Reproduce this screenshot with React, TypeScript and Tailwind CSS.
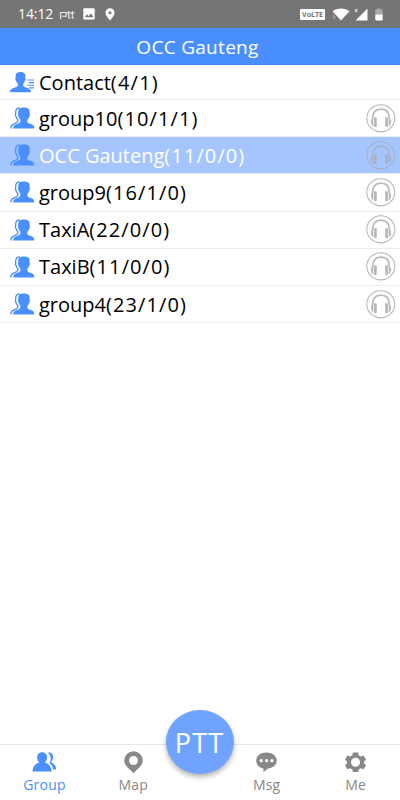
import clsx from 'clsx'

const groups = [
    { name: 'group10', count: '(10/1/1)' },
    { name: 'OCC Gauteng', count: '(11/0/0)', active: true },
    { name: 'group9', count: '(16/1/0)' },
    { name: 'TaxiA', count: '(22/0/0)' },
    { name: 'TaxiB', count: '(11/0/0)' },
    { name: 'group4', count: '(23/1/0)' },
]

const ContactIcon = () => (
    <svg width="25" height="22" viewBox="0 0 25 22" className="shrink-0" fill="#4a8fff">
        <path d="M5.600 5C5.600 2 7.400.9 10.500.9s5 1.100 5 4.100l-.1 2.100c.6.3.4 2-.4 2.500-.4 1.600-1 2.400-1.800 3.100v2.100c.6 1.200 2.300 1.600 4.300 2.200 2.500.8 3.400 1.600 3.500 4.300H0c.1-2.700 1-3.500 3.500-4.300 2-.6 3.700-1 4.300-2.200v-2.100C7 12 6.400 11.200 6 9.600c-.8-.5-1-2.200-.4-2.500z" />
        <path d="M17.200 8.500H24v1.100h-6.800zM18.500 11.100H24v1.100h-5.500zM17 13.700h7v1.100h-7zM19 16.300h5v1.100h-5z" />
    </svg>
)

const GroupIcon = () => (
    <svg width="25" height="22" viewBox="0 0 25 22" className="shrink-0" fill="#4a8fff">
        <path d="M8.200 5C8.200 1.700 10.300.5 14 .5s5.700 1.200 5.700 4.400l-.1 2.200c.6.3.4 2-.4 2.600-.4 1.600-1 2.400-1.800 3.100v2.100c.6 1.200 2 1.600 3.800 2.200 2.300.8 3 1.700 3.100 4.500H3.100c.2-2.600 1.100-3.600 3.100-4.400 2.100-.8 3.600-1.200 4.200-2.500v-2.200c-.8-.7-1.400-1.300-1.700-2.800-.7-.6-1-2.200-.5-2.600z" />
        <path
            d="M10 .9C7 1 5.700 2.300 5.700 5v2.200c-.6.5-.2 1.900.4 2.400.3 1.400.9 2.100 1.700 2.800v2c-.6 1.300-2 1.800-3.800 2.500C1.700 17.800.9 18.900.8 21.500"
            fill="none"
            stroke="#4a8fff"
            strokeWidth="1.300"
        />
    </svg>
)

const Headphones = ({ active }: { active?: boolean }) => (
    <svg
        width="30"
        height="29"
        viewBox="0 0 30 29"
        className={clsx('shrink-0', active ? 'text-[#a9b0c4]' : 'text-[#b8b8b8]')}
        fill="none"
        stroke="currentColor"
    >
        <ellipse cx="14.800" cy="14.300" rx="14" ry="13.600" strokeWidth="1.100" />
        <path d="M6.700 14.500C6.400 8.500 9.500 5.200 15 5.200s8.600 3.300 8.300 9.300" strokeWidth="1.700" />
        <path d="M7 13.500c-2.600 2-2.600 6.400 0 8.800zM23 13.500c2.600 2 2.600 6.400 0 8.800z" fill="currentColor" strokeWidth=".3" />
        <rect x="7.900" y="13.200" width="2.900" height="9.800" rx="1" fill="currentColor" stroke="none" />
        <rect x="19.200" y="13.200" width="2.900" height="9.800" rx="1" fill="currentColor" stroke="none" />
    </svg>
)

const StatusBar = () => (
    <div className="flex h-7 items-center bg-[#757575] pl-[18px] pr-[17px] text-white">
        <span className="w-[35px] text-[14px] leading-none tracking-[-0.1px]">14:12</span>
        <svg width="15" height="10" viewBox="0 0 15 10" className="ml-[7px] mt-[2px]" fill="none" stroke="#eee" strokeWidth="1.100">
            <path d="M.6 9V2.500h5.600v3.800H2M8.700 1v7h2M12.300 1v7h2M6.800 3h8" />
        </svg>
        <svg width="12" height="12" viewBox="0 0 12 12" className="ml-[8px]">
            <rect x=".3" y=".3" width="11.400" height="11.200" rx="1.200" fill="#fff" />
            <path d="M1.800 9.300 4 6.300l1.700 2 2.200-3 2.500 4z" fill="#757575" />
        </svg>
        <svg width="10" height="13" viewBox="0 0 10 13" className="ml-[10px]">
            <path d="M5 .3A4.500 4.500 0 0 0 .5 4.800C.5 8 5 12.500 5 12.500S9.500 8 9.500 4.800A4.500 4.500 0 0 0 5 .3z" fill="#fff" />
            <circle cx="5" cy="4.800" r="1.500" fill="#757575" />
        </svg>
        <span className="ml-auto flex h-[11px] w-[25px] items-center justify-center rounded-[1px] bg-white text-[7px] font-bold leading-none text-[#757575]">
            VoLTE
        </span>
        <svg width="18" height="13" viewBox="0 0 18 13" className="ml-[7px]">
            <path d="M.5 3.200C5.500-.5 12.500-.5 17.500 3.200L9 12.500z" fill="#fff" />
            <path d="M1.500 6v5M3 8v3" stroke="#aaa" strokeWidth=".8" />
        </svg>
        <svg width="14" height="13" viewBox="0 0 14 13" className="ml-[4px]">
            <path d="M13.500.5v12h-12z" fill="#fff" />
            <path d="m1 1 2.500 3.300M3.500 1 1 4.300" stroke="#fff" strokeWidth=".9" />
        </svg>
        <svg width="8" height="13" viewBox="0 0 8 13" className="ml-[7px]">
            <path d="M.3 2.500Q.3 1.500 1.300 1.500h1V.5h3.400v1h1q1 0 1 1v4H.3z" fill="#aaa" />
            <path d="M.3 6.500h7.400v5q0 1-1 1H1.300q-1 0-1-1z" fill="#fff" />
        </svg>
    </div>
)

const tabs = [
    {
        label: 'Group',
        icon: (
            <>
                <path d="M16 .8c3-.8 5.700 1.300 5.500 4.600-.1 2-.9 3.500-2 4.400v.9c3 1.300 5.100 3.900 5.300 7.700h-3.300c-.4-3.300-1.800-5.500-4-6.900 2.300-3 2-8-1.500-10.700z" />
                <path d="M10 .4c3 0 5.200 2.200 5.200 5.500 0 2.200-.9 4-2.300 5 4.200 1 6.900 4.400 7.100 9.400H0c.2-5 2.900-8.400 7.100-9.400-1.400-1-2.300-2.800-2.300-5C4.800 2.600 7 .4 10 .4z" />
            </>
        ),
    },
    {
        label: 'Map',
        icon: <path fillRule="evenodd" d="M12.500-.8A9.700 9.700 0 0 0 2.800 8.900c0 5 4.700 8 9.700 13.300 5-5.300 9.700-8.300 9.700-13.300A9.700 9.700 0 0 0 12.500-.8zm0 5a4.700 4.700 0 1 1 0 9.400 4.700 4.700 0 0 1 0-9.400z" />,
    },
    {
        label: 'Msg',
        icon: <path fillRule="evenodd" d="M12.500.6C6.400.6 1.800 4.200 1.800 8.900c0 4.600 3.300 7.600 7.600 8.300l-.2 4 5-4c5.400-.6 9-3.800 9-8.300 0-4.700-4.600-8.300-10.700-8.300zM7 7.400a1.700 1.700 0 1 1 0 3.400 1.700 1.700 0 0 1 0-3.400zm5.600 0a1.700 1.700 0 1 1 0 3.400 1.700 1.700 0 0 1 0-3.400zm5.600 0a1.700 1.700 0 1 1 0 3.400 1.700 1.700 0 0 1 0-3.400z" />,
    },
    {
        label: 'Me',
        icon: <path fillRule="evenodd" d="M9.800.6h5.400l.6 2.900 2.300 1.300 2.900-1 2.500 4.200-2.200 1.900v1.900l2.200 2-2.500 4.200-2.900-1-2.300 1.300-.6 2.500H9.800l-.6-2.500-2.300-1.300-2.900 1-2.500-4.200 2.200-2V9.900L1.500 8 4 3.800l2.900 1 2.300-1.300zm2.700 5.500a4.700 4.700 0 1 0 0 9.400 4.700 4.700 0 0 0 0-9.400z" />,
    },
]

const Tab = ({ label, icon, active }: { label: string; icon: React.ReactNode; active?: boolean }) => (
    <button className={clsx('flex flex-[2] flex-col items-center pt-[6px]', active ? 'text-[#4a8fff]' : 'text-[#888]')}>
        <svg width="25" height="23" viewBox="0 -1 25 24" fill="currentColor">{icon}</svg>
        <span className="mt-[2px] text-[14px] leading-[18px] tracking-[0.2px]">{label}</span>
    </button>
)

const App = () => {
    return (
        <div className="flex h-[800px] w-[400px] flex-col overflow-hidden bg-white font-['Open_Sans','Noto_Sans',sans-serif]">
            <StatusBar />
            <header className="flex h-[37px] items-center justify-center border-b border-[#4383ed] bg-[#4a8fff] pr-[5px] pt-[2px] text-[19px] tracking-[0.3px] text-white">
                OCC Gauteng
            </header>
            <ul className="flex-1 text-[20px] text-black">
                <li className="flex h-[35px] items-center border-b border-[#ececec] pl-[10px]">
                    <ContactIcon />
                    <span className="ml-[4px] pt-[2px]">Contact<span className="tracking-[1.200px]">(4/1)</span></span>
                </li>
                {groups.map((group) => (
                    <li
                        key={group.name}
                        className={clsx('flex h-[37.2px] items-center border-b border-[#ececec] pl-[10px] pr-[4px]', group.active && 'bg-[#a5c5ff] text-white')}
                    >
                        <GroupIcon />
                        <span className="ml-[4px] flex-1 pt-px">
                            {group.name}
                            <span className="tracking-[1.100px]">{group.count}</span>
                        </span>
                        <Headphones active={group.active} />
                    </li>
                ))}
            </ul>
            <nav className="relative flex h-14 border-t border-[#e8e8e8] bg-white">
                <Tab {...tabs[0]} active />
                <Tab {...tabs[1]} />
                <div className="flex-1" />
                <Tab {...tabs[2]} />
                <Tab {...tabs[3]} />
                <button className="absolute left-[166px] top-[-35px] flex h-16 w-[68px] items-center justify-center rounded-[50%] bg-[#6fa3ff] pr-px pt-[2px] text-[27px] tracking-[1.200px] text-white shadow-[0_3px_5px_rgba(0,0,0,0.3)]">
                    PTT
                </button>
            </nav>
        </div>
    )
}

export default App
